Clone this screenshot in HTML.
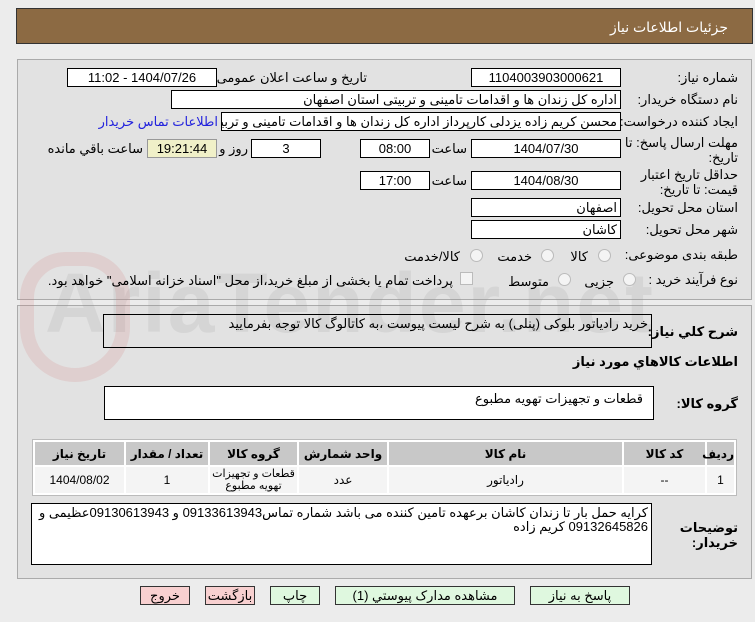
<!DOCTYPE html>
<html><head><meta charset="utf-8"><style>
body{margin:0;width:755px;height:622px;background:#ececec;font-family:"Liberation Sans","DejaVu Sans",sans-serif;font-size:13px;color:#000;position:relative;overflow:hidden}
.a{position:absolute;white-space:nowrap}
.hd{left:16px;top:8px;width:735px;height:34px;background:#8c6a43;border:1px solid #333}
.pn{border:1px solid #aaa;background:#e2e2e2}
.b{position:absolute;background:#fff;border:1px solid #000;box-sizing:border-box;height:19px;line-height:17px;text-align:center;direction:rtl;overflow:hidden;white-space:nowrap}
.l{position:absolute;direction:rtl;white-space:nowrap;text-align:right}
.r{position:absolute;width:11px;height:11px;border:1px solid #bbb;border-radius:50%;background:#f4f4f4}
.btn{position:absolute;top:586px;height:19px;border:1px solid #333;box-sizing:border-box;text-align:center;line-height:17px;direction:rtl;background:#dff8df}
table{border-collapse:separate;border-spacing:2px;position:absolute;left:32px;top:439px;width:705px;background:#fff;border:1px solid #bbb;direction:rtl;table-layout:fixed}
th{background:#c8c8c8;height:23px;font-weight:bold;font-size:12px;padding:0}
td{background:#f4f4f4;height:26px;text-align:center;font-size:12px;padding:0;line-height:13px}
</style></head><body>
<div class="a hd"></div>
<div class="l" style="right:27px;top:19px;color:#fff;font-size:14px">جزئیات اطلاعات نیاز</div>
<div class="a pn" style="left:17px;top:59px;width:733px;height:239px"></div>
<div class="a pn" style="left:17px;top:305px;width:733px;height:272px"></div>
<div class="a" style="left:45px;top:255px;font-size:84px;font-weight:bold;color:rgba(150,150,150,0.16);letter-spacing:2px">AriaTender.net</div>
<div class="a" style="left:20px;top:252px;width:110px;height:130px;border:14px solid rgba(210,120,120,0.18);border-radius:50px 50px 60px 60px;box-sizing:border-box"></div>

<div class="l" style="right:17px;top:70px">شماره نیاز:</div>
<div class="b" style="left:471px;top:68px;width:150px">1104003903000621</div>
<div class="l" style="right:388px;top:70px">تاریخ و ساعت اعلان عمومی:</div>
<div class="b" style="left:67px;top:68px;width:150px">1404/07/26 - 11:02</div>

<div class="l" style="right:17px;top:92px">نام دستگاه خریدار:</div>
<div class="b" style="left:171px;top:90px;width:450px;text-align:right;padding-right:3px">اداره کل زندان ها و اقدامات تامینی و تربیتی استان اصفهان</div>

<div class="l" style="right:17px;top:114px">ایجاد کننده درخواست:</div>
<div class="b" style="left:221px;top:112px;width:400px;text-align:right;padding-right:3px">محسن کریم زاده یزدلی کارپرداز اداره کل زندان ها و اقدامات تامینی و تربیتی استان اصفهان</div>
<div class="l" style="right:537px;top:114px;color:#2222dd">اطلاعات تماس خریدار</div>

<div class="l" style="right:17px;top:135px;line-height:15px;text-align:right">مهلت ارسال پاسخ: تا<br>تاریخ:</div>
<div class="b" style="left:471px;top:139px;width:150px">1404/07/30</div>
<div class="l" style="right:288px;top:141px">ساعت</div>
<div class="b" style="left:360px;top:139px;width:70px">08:00</div>
<div class="b" style="left:251px;top:139px;width:70px">3</div>
<div class="l" style="right:507px;top:141px">روز و</div>
<div class="b" style="left:147px;top:139px;width:70px;background:#f0f0c8;border-color:#999">19:21:44</div>
<div class="l" style="right:612px;top:141px">ساعت باقي مانده</div>

<div class="l" style="right:17px;top:167px;line-height:15px">حداقل تاریخ اعتبار<br>قیمت: تا تاریخ:</div>
<div class="b" style="left:471px;top:171px;width:150px">1404/08/30</div>
<div class="l" style="right:288px;top:173px">ساعت</div>
<div class="b" style="left:360px;top:171px;width:70px">17:00</div>

<div class="l" style="right:17px;top:200px">استان محل تحویل:</div>
<div class="b" style="left:471px;top:198px;width:150px;text-align:right;padding-right:3px">اصفهان</div>
<div class="l" style="right:17px;top:222px">شهر محل تحویل:</div>
<div class="b" style="left:471px;top:220px;width:150px;text-align:right;padding-right:3px">کاشان</div>

<div class="l" style="right:17px;top:247px">طبقه بندی موضوعی:</div>
<div class="r" style="left:598px;top:249px"></div><div class="l" style="right:167px;top:249px">کالا</div>
<div class="r" style="left:541px;top:249px"></div><div class="l" style="right:223px;top:249px">خدمت</div>
<div class="r" style="left:470px;top:249px"></div><div class="l" style="right:295px;top:249px">کالا/خدمت</div>

<div class="l" style="right:17px;top:272px">نوع فرآیند خرید :</div>
<div class="r" style="left:623px;top:273px"></div><div class="l" style="right:141px;top:274px">جزیی</div>
<div class="r" style="left:558px;top:273px"></div><div class="l" style="right:206px;top:274px">متوسط</div>
<div class="a" style="left:460px;top:272px;width:11px;height:11px;border:1px solid #bbb;background:#f4f4f4"></div>
<div class="l" style="right:302px;top:273px">پرداخت تمام یا بخشی از مبلغ خرید،از محل "اسناد خزانه اسلامی" خواهد بود.</div>

<div class="l" style="right:17px;top:324px;font-weight:bold">شرح کلي نیاز:</div>
<div class="b" style="left:103px;top:314px;width:549px;height:34px;text-align:right;padding-right:3px;background:transparent">خرید رادیاتور بلوکی (پنلی) به شرح لیست پیوست ،به کاتالوگ کالا توجه بفرمایید</div>
<div class="l" style="right:17px;top:354px;font-weight:bold">اطلاعات کالاهاي مورد نیاز</div>
<div class="l" style="right:17px;top:396px;font-weight:bold">گروه کالا:</div>
<div class="b" style="left:104px;top:386px;width:550px;height:34px;text-align:right;padding-right:10px;line-height:24px">قطعات و تجهیزات تهویه مطبوع</div>

<table>
<tr><th style="width:27px">ردیف</th><th style="width:81px">کد کالا</th><th style="width:233px">نام کالا</th><th style="width:88px">واحد شمارش</th><th style="width:87px">گروه کالا</th><th style="width:82px">تعداد / مقدار</th><th>تاریخ نیاز</th></tr>
<tr><td>1</td><td>--</td><td>رادیاتور</td><td>عدد</td><td style="font-size:11px;line-height:12px">قطعات و تجهیزات<br>تهویه مطبوع</td><td>1</td><td>1404/08/02</td></tr>
</table>

<div class="l" style="right:17px;top:520px;font-weight:bold;line-height:15px">توضیحات<br>خریدار:</div>
<div class="b" style="left:31px;top:503px;width:621px;height:62px;text-align:right;padding:2px 3px;line-height:14px;white-space:normal">کرایه حمل بار تا زندان کاشان برعهده تامین کننده می باشد شماره تماس09133613943 و 09130613943عظیمی و 09132645826 کریم زاده</div>

<div class="btn" style="left:530px;width:100px">پاسخ به نیاز</div>
<div class="btn" style="left:335px;width:180px">مشاهده مدارک پیوستي (1)</div>
<div class="btn" style="left:270px;width:50px">چاپ</div>
<div class="btn" style="left:205px;width:50px;background:#f8d0d0">بازگشت</div>
<div class="btn" style="left:140px;width:50px;background:#f8d0d0">خروج</div>
</body></html>
